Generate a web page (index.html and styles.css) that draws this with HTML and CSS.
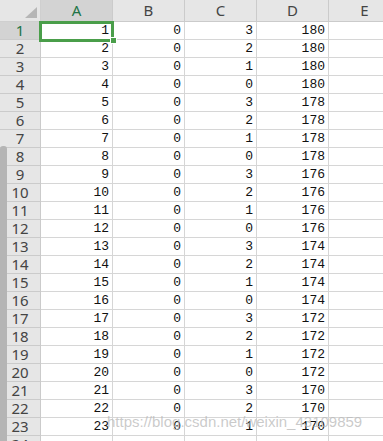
FILE: index.html
```html
<!DOCTYPE html>
<html lang="en">
<head>
    <meta charset="UTF-8">
    <title>Sheet1</title>
    <link rel="stylesheet" href="styles.css">
</head>
<body>
    <div class="sheet">
        <div class="corner"></div>
        <div class="col-head active">A</div>
        <div class="col-head">B</div>
        <div class="col-head">C</div>
        <div class="col-head">D</div>
        <div class="col-head">E</div>

        <div class="row-head active">1</div><div class="cell selected">1</div><div class="cell">0</div><div class="cell">3</div><div class="cell">180</div><div class="cell"></div>
        <div class="row-head">2</div><div class="cell">2</div><div class="cell">0</div><div class="cell">2</div><div class="cell">180</div><div class="cell"></div>
        <div class="row-head">3</div><div class="cell">3</div><div class="cell">0</div><div class="cell">1</div><div class="cell">180</div><div class="cell"></div>
        <div class="row-head">4</div><div class="cell">4</div><div class="cell">0</div><div class="cell">0</div><div class="cell">180</div><div class="cell"></div>
        <div class="row-head">5</div><div class="cell">5</div><div class="cell">0</div><div class="cell">3</div><div class="cell">178</div><div class="cell"></div>
        <div class="row-head">6</div><div class="cell">6</div><div class="cell">0</div><div class="cell">2</div><div class="cell">178</div><div class="cell"></div>
        <div class="row-head">7</div><div class="cell">7</div><div class="cell">0</div><div class="cell">1</div><div class="cell">178</div><div class="cell"></div>
        <div class="row-head">8</div><div class="cell">8</div><div class="cell">0</div><div class="cell">0</div><div class="cell">178</div><div class="cell"></div>
        <div class="row-head">9</div><div class="cell">9</div><div class="cell">0</div><div class="cell">3</div><div class="cell">176</div><div class="cell"></div>
        <div class="row-head">10</div><div class="cell">10</div><div class="cell">0</div><div class="cell">2</div><div class="cell">176</div><div class="cell"></div>
        <div class="row-head">11</div><div class="cell">11</div><div class="cell">0</div><div class="cell">1</div><div class="cell">176</div><div class="cell"></div>
        <div class="row-head">12</div><div class="cell">12</div><div class="cell">0</div><div class="cell">0</div><div class="cell">176</div><div class="cell"></div>
        <div class="row-head">13</div><div class="cell">13</div><div class="cell">0</div><div class="cell">3</div><div class="cell">174</div><div class="cell"></div>
        <div class="row-head">14</div><div class="cell">14</div><div class="cell">0</div><div class="cell">2</div><div class="cell">174</div><div class="cell"></div>
        <div class="row-head">15</div><div class="cell">15</div><div class="cell">0</div><div class="cell">1</div><div class="cell">174</div><div class="cell"></div>
        <div class="row-head">16</div><div class="cell">16</div><div class="cell">0</div><div class="cell">0</div><div class="cell">174</div><div class="cell"></div>
        <div class="row-head">17</div><div class="cell">17</div><div class="cell">0</div><div class="cell">3</div><div class="cell">172</div><div class="cell"></div>
        <div class="row-head">18</div><div class="cell">18</div><div class="cell">0</div><div class="cell">2</div><div class="cell">172</div><div class="cell"></div>
        <div class="row-head">19</div><div class="cell">19</div><div class="cell">0</div><div class="cell">1</div><div class="cell">172</div><div class="cell"></div>
        <div class="row-head">20</div><div class="cell">20</div><div class="cell">0</div><div class="cell">0</div><div class="cell">172</div><div class="cell"></div>
        <div class="row-head">21</div><div class="cell">21</div><div class="cell">0</div><div class="cell">3</div><div class="cell">170</div><div class="cell"></div>
        <div class="row-head">22</div><div class="cell">22</div><div class="cell">0</div><div class="cell">2</div><div class="cell">170</div><div class="cell"></div>
        <div class="row-head">23</div><div class="cell">23</div><div class="cell">0</div><div class="cell">1</div><div class="cell">170</div><div class="cell"></div>
        <div class="row-head">24</div><div class="cell"></div><div class="cell"></div><div class="cell"></div><div class="cell"></div><div class="cell"></div>
    </div>

    <div class="side-bar"></div>
    <div class="watermark">https://blog.csdn.net/weixin_43109859</div>
</body>
</html>
```

FILE: styles.css
```css
html, body {
    margin: 0;
    height: 100%;
    overflow: hidden;
    background: #fff;
}

.sheet {
    display: grid;
    grid-template-columns: 41px 72px 72px 72px 72px 72px;
    grid-template-rows: 22px;
    grid-auto-rows: 18px;
}

.corner,
.col-head,
.row-head,
.cell {
    box-sizing: border-box;
    border-right: 1px solid #d6d6d6;
    border-bottom: 1px solid #d6d6d6;
}

/* header strip */
.corner {
    position: relative;
    background: #e6e6e6;
    border-color: #cfcfcf;
}
.corner::after {
    content: "";
    position: absolute;
    right: 3px;
    bottom: 3px;
    width: 12px;
    height: 11px;
    background: #b6b6b6;
    clip-path: polygon(100% 0, 100% 100%, 0 100%);
}

.col-head {
    background: #e6e6e6;
    border-color: #cbcbcb;
    color: #444;
    font-family: "Noto Sans", sans-serif;
    font-size: 15px;
    line-height: 21px;
    text-align: center;
}

.row-head {
    background: #e6e6e6;
    border-color: #cbcbcb;
    color: #444;
    font-family: "Noto Sans", sans-serif;
    font-size: 15px;
    line-height: 17px;
    text-align: center;
}

.col-head.active,
.row-head.active {
    background: #d3d3d3;
    color: #217346;
}

/* data cells */
.cell {
    position: relative;
    padding-right: 3px;
    color: #111;
    font-family: "Liberation Mono", monospace;
    font-size: 13px;
    line-height: 18px;
    text-align: right;
}

.cell.selected::before {
    content: "";
    position: absolute;
    top: -1px;
    left: -2px;
    width: 75px;
    height: 21px;
    box-sizing: border-box;
    border: 3px solid #4a9e4a;
    z-index: 2;
}
.cell.selected::after {
    content: "";
    position: absolute;
    left: 69px;
    top: 15px;
    width: 5px;
    height: 5px;
    background: #4a9e4a;
    border: 1px solid #fff;
    z-index: 3;
}

/* overlays from the screenshot */
.side-bar {
    position: absolute;
    left: 0;
    top: 146px;
    bottom: 0;
    width: 7px;
    background: #b5b5b5;
    border-radius: 3px 3px 0 0;
}

.watermark {
    position: absolute;
    left: 107px;
    top: 413px;
    font-family: "Liberation Sans", Arial, sans-serif;
    font-size: 15px;
    color: rgba(185, 185, 185, 0.75);
    white-space: nowrap;
}
```
